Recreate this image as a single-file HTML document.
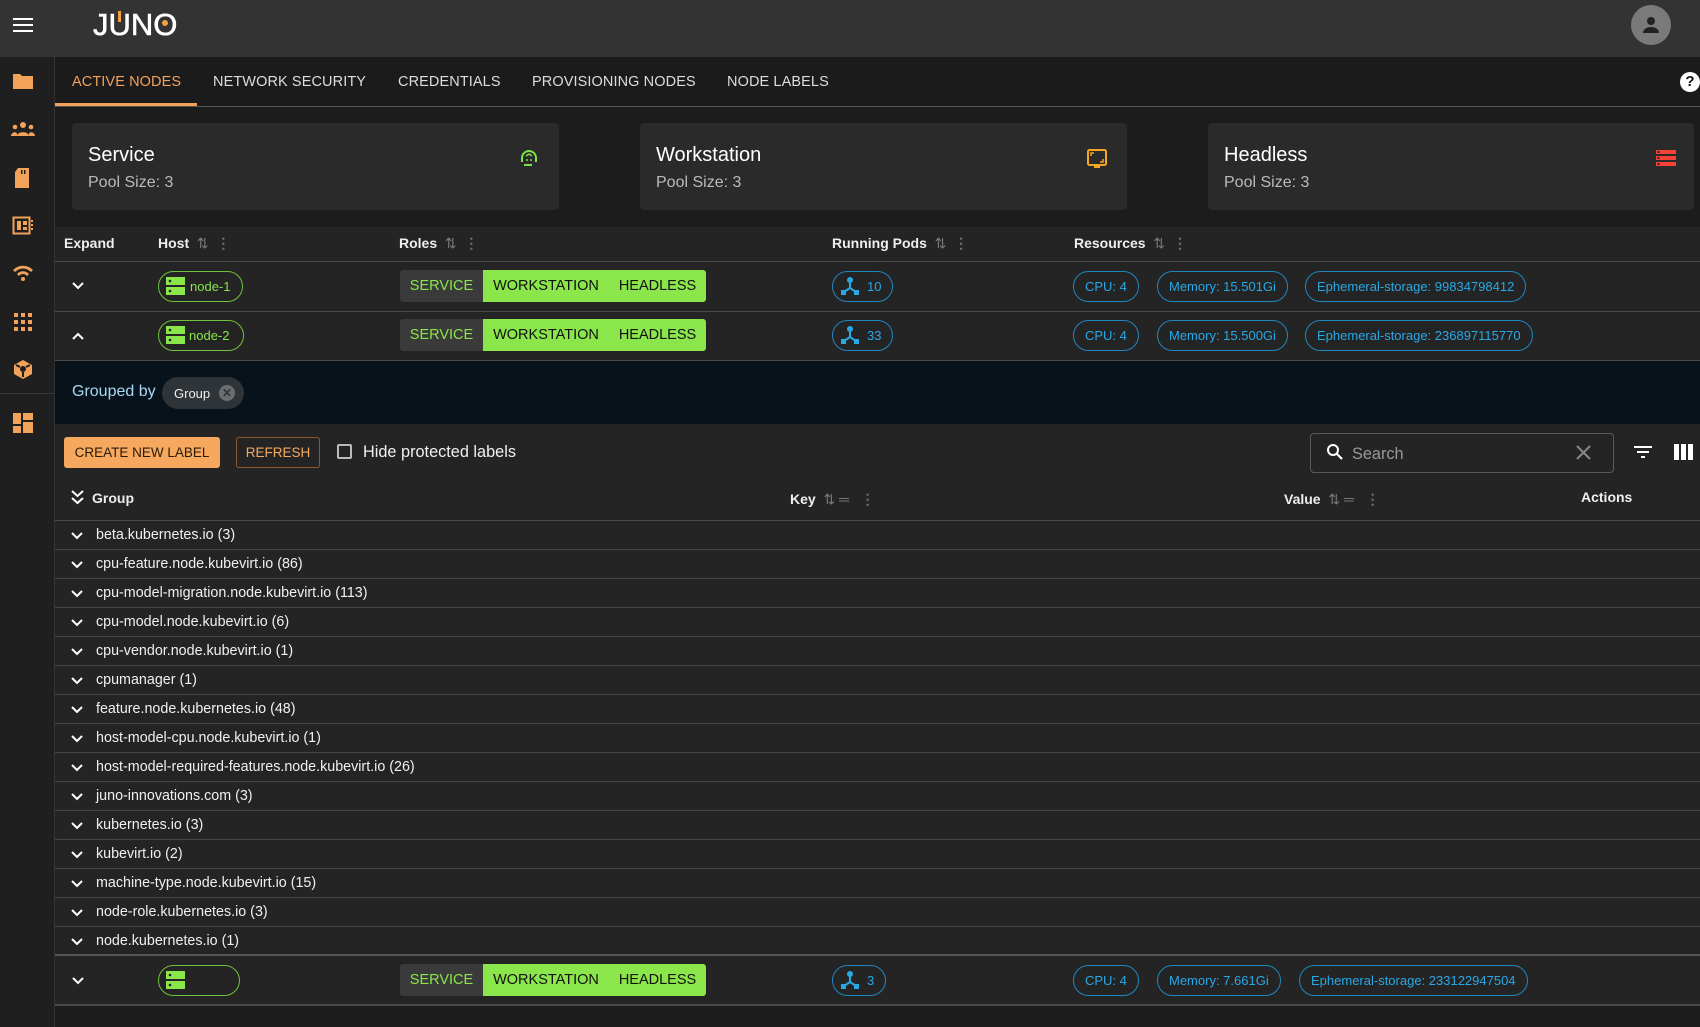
<!DOCTYPE html>
<html><head><meta charset="utf-8"><style>
*{box-sizing:border-box;margin:0;padding:0}
body{width:1700px;height:1027px;overflow:hidden;background:#1c1c1c;font-family:"Liberation Sans",sans-serif;color:#fff;position:relative}
.a{position:absolute}
.top{left:0;top:0;width:1700px;height:57px;background:#333;}
.side{left:0;top:57px;width:55px;height:970px;background:#1f1f1f;border-right:1px solid #333}
.tabs{left:55px;top:57px;width:1645px;height:50px;background:#1b1b1b;border-bottom:1px solid #555}
.tab{position:absolute;top:17px;font-size:14.5px;color:#ddd;letter-spacing:.1px}
.card{top:123px;height:87px;background:#2a2a2a;border-radius:4px}
.card .t{position:absolute;left:16px;top:20px;font-size:20px;color:#fff}
.card .s{position:absolute;left:16px;top:50px;font-size:16px;color:#bbb}
.th{font-size:14px;font-weight:bold;color:#eee}
.sort{color:#777;font-weight:normal;font-size:14px}
.dots{color:#777;font-weight:bold}
.hline{left:55px;width:1645px;height:1px;background:#4a4a4a}
.chipg{height:31px;border:1.5px solid #6fc23d;border-radius:16px;color:#8ae64a;font-size:13px}
.roles{height:32px;display:flex;font-size:14.5px;border-radius:3px;overflow:hidden}
.roles div{line-height:32px;text-align:center}
.rs{background:#3a3a3a;color:#8ae64a;width:83px}
.rg{background:#8ae64a;color:#111}
.w1{width:126px}.w2{width:97px}
.bl{height:31px;border:1.2px solid #1f87c0;border-radius:16px;color:#29a8e6;font-size:13px;line-height:29px;padding:0 11px}
.grow{left:55px;width:1645px;height:29px;border-bottom:1px solid #454545;font-size:14.3px;color:#f0f0f0}
.grow span{position:absolute;left:41px;top:6px}
.chev{position:absolute;left:16px;top:6px}
</style></head><body>
<div class="a top"></div>
<svg class="a" style="left:13px;top:17px" width="20" height="16"><rect y="1" width="20" height="2" fill="#fff"/><rect y="7" width="20" height="2" fill="#fff"/><rect y="13" width="20" height="2" fill="#fff"/></svg>
<div class="a" style="left:93px;top:7px;font-size:31px;letter-spacing:0px;color:#fff;-webkit-text-stroke:0.6px #fff">J<span style="display:inline-block;position:relative">U<span style="position:absolute;left:9px;top:4px;width:3px;height:11px;background:#f5a040"></span></span>N<span style="display:inline-block;position:relative">O<span style="position:absolute;left:9px;top:13px;width:6px;height:6px;border-radius:3px;background:#f5a040"></span></span></div>
<div class="a" style="left:1631px;top:5px;width:40px;height:40px;border-radius:50%;background:#7a7a7a"></div>
<svg class="a" style="left:1639px;top:13px" width="24" height="24" viewBox="0 0 24 24"><circle cx="12" cy="8" r="4" fill="#222"/><path d="M4 20c0-4 4-6 8-6s8 2 8 6z" fill="#222"/></svg>

<div class="a side"></div>
<div class="a" style="left:0;top:393px;width:55px;height:1px;background:#3a3a3a"></div>
<svg class="a" style="left:12px;top:71px" width="22" height="20"><path d="M1 3h7l2 2h11v13H1z" fill="#f3a25a"/></svg>
<svg class="a" style="left:10px;top:121px" width="26" height="16"><circle cx="13" cy="4" r="3" fill="#f3a25a"/><circle cx="5" cy="6" r="2.3" fill="#f3a25a"/><circle cx="21" cy="6" r="2.3" fill="#f3a25a"/><path d="M7 15c0-5 12-5 12 0z M1 15c0-4 6-5 6-2v2z M25 15c0-4-6-5-6-2v2z" fill="#f3a25a"/></svg>
<svg class="a" style="left:13px;top:167px" width="18" height="22"><path d="M5 1h11v20H2V5z" fill="#f3a25a"/><rect x="8" y="3" width="1.5" height="4" fill="#1f1f1f"/><rect x="11" y="3" width="1.5" height="4" fill="#1f1f1f"/></svg>
<svg class="a" style="left:12px;top:216px" width="22" height="20"><rect x="1.5" y="1.5" width="16" height="16" fill="none" stroke="#f3a25a" stroke-width="2"/><rect x="5" y="5" width="4" height="9" fill="#f3a25a"/><rect x="11" y="5" width="4" height="4" fill="#f3a25a"/><rect x="11" y="11" width="4" height="3" fill="#f3a25a"/><rect x="19" y="4" width="2" height="2" fill="#f3a25a"/><rect x="19" y="8" width="2" height="2" fill="#f3a25a"/><rect x="19" y="12" width="2" height="2" fill="#f3a25a"/></svg>
<svg class="a" style="left:12px;top:265px" width="22" height="16"><path d="M1 5a14 14 0 0 1 20 0l-2 2a11 11 0 0 0-16 0z M5 9a8 8 0 0 1 12 0l-2 2a5 5 0 0 0-8 0z" fill="#f3a25a"/><circle cx="11" cy="14" r="2" fill="#f3a25a"/></svg>
<svg class="a" style="left:14px;top:313px" width="18" height="18"><g fill="#f3a25a"><rect x="0" y="0" width="4" height="4"/><rect x="7" y="0" width="4" height="4"/><rect x="14" y="0" width="4" height="4"/><rect x="0" y="7" width="4" height="4"/><rect x="7" y="7" width="4" height="4"/><rect x="14" y="7" width="4" height="4"/><rect x="0" y="14" width="4" height="4"/><rect x="7" y="14" width="4" height="4"/><rect x="14" y="14" width="4" height="4"/></g></svg>
<svg class="a" style="left:13px;top:359px" width="20" height="21"><path d="M10 1l9 5v9l-9 5-9-5V6z" fill="#f3a25a"/><circle cx="10" cy="10" r="3" fill="#1f1f1f"/><path d="M10 13v5M7 8L3 6M13 8l4-2" stroke="#1f1f1f" stroke-width="2"/></svg>
<svg class="a" style="left:13px;top:413px" width="20" height="20"><g fill="#f3a25a"><rect x="0" y="0" width="8" height="11"/><rect x="10" y="0" width="10" height="7"/><rect x="10" y="9" width="10" height="11"/><rect x="0" y="13" width="8" height="7"/></g></svg>

<div class="a tabs"></div>
<div class="tab" style="left:72px;top:74px;color:#f3a25a">ACTIVE NODES</div>
<div class="a" style="left:55px;top:103px;width:142px;height:3px;background:#f3a25a"></div>
<div class="tab" style="left:213px;top:74px">NETWORK SECURITY</div>
<div class="tab" style="left:398px;top:74px">CREDENTIALS</div>
<div class="tab" style="left:532px;top:74px">PROVISIONING NODES</div>
<div class="tab" style="left:727px;top:74px">NODE LABELS</div>
<div class="a" style="left:1680px;top:72px;width:20px;height:20px;border-radius:10px;background:#fff;color:#111;font-weight:bold;font-size:15px;text-align:center;line-height:20px">?</div>

<div class="a card" style="left:72px;width:487px"><div class="t" style="top:21px">Service</div><div class="s" style="top:51px">Pool Size: 3</div>
<svg class="a" style="left:447px;top:26px" width="20" height="20" viewBox="0 0 20 20"><path d="M3 13V9a7 7 0 0 1 14 0v4" fill="none" stroke="#7fe046" stroke-width="2"/><path d="M5 16h8" stroke="#7fe046" stroke-width="2"/><path d="M7 7l3-2 3 2" fill="none" stroke="#7fe046" stroke-width="1.5"/><circle cx="8" cy="11" r="1" fill="#7fe046"/><circle cx="12" cy="11" r="1" fill="#7fe046"/></svg></div>
<div class="a card" style="left:640px;width:487px"><div class="t" style="top:21px">Workstation</div><div class="s" style="top:51px">Pool Size: 3</div>
<svg class="a" style="left:447px;top:26px" width="20" height="20"><rect x="1" y="1" width="18" height="15" rx="1.5" fill="none" stroke="#f5a623" stroke-width="2"/><rect x="7" y="17" width="6" height="2" fill="#f5a623"/><path d="M4 7V4h3M16 10v3h-3" fill="none" stroke="#f5a623" stroke-width="1.5"/></svg></div>
<div class="a card" style="left:1208px;width:486px"><div class="t" style="top:21px">Headless</div><div class="s" style="top:51px">Pool Size: 3</div>
<svg class="a" style="left:448px;top:27px" width="20" height="17"><g fill="#f44336"><rect y="0" width="20" height="4"/><rect y="6" width="20" height="4"/><rect y="12" width="20" height="4"/></g><g fill="#2a2a2a"><rect x="1.5" y="1" width="2" height="2"/><rect x="1.5" y="7" width="2" height="2"/><rect x="1.5" y="13" width="2" height="2"/></g></svg></div>

<div class="a" style="left:55px;top:227px;width:1645px;height:780px;background:#242424"></div>
<div class="a th" style="left:64px;top:235px">Expand</div>
<div class="a th" style="left:158px;top:235px">Host <span class="sort">&nbsp;⇅</span> <span class="dots">&nbsp;⋮</span></div>
<div class="a th" style="left:399px;top:235px">Roles <span class="sort">&nbsp;⇅</span> <span class="dots">&nbsp;⋮</span></div>
<div class="a th" style="left:832px;top:235px">Running Pods <span class="sort">&nbsp;⇅</span> <span class="dots">&nbsp;⋮</span></div>
<div class="a th" style="left:1074px;top:235px">Resources <span class="sort">&nbsp;⇅</span> <span class="dots">&nbsp;⋮</span></div>
<div class="a hline" style="top:261px"></div>
<div class="a hline" style="top:311px"></div>
<div class="a hline" style="top:360px"></div>

<!-- row1 -->
<svg class="a" style="left:72px;top:282px" width="12" height="8"><path d="M1 1l5 5 5-5" fill="none" stroke="#fff" stroke-width="2"/></svg>
<div class="a chipg" style="left:158px;top:271px;width:85px"><svg class="a" style="left:7px;top:5px" width="19" height="18"><rect width="19" height="8" fill="#8ae64a"/><rect y="10" width="19" height="8" fill="#8ae64a"/><circle cx="4" cy="4" r="1.3" fill="#222"/><circle cx="4" cy="14" r="1.3" fill="#222"/></svg><span class="a" style="left:31px;top:7px">node-1</span></div>
<div class="a roles" style="left:400px;top:270px"><div class="rs">SERVICE</div><div class="rg w1">WORKSTATION</div><div class="rg w2">HEADLESS</div></div>
<div class="a bl" style="left:832px;top:271px;padding-left:34px">10</div>
<div class="a bl" style="left:1073px;top:271px">CPU: 4</div>
<div class="a bl" style="left:1157px;top:271px">Memory: 15.501Gi</div>
<div class="a bl" style="left:1305px;top:271px">Ephemeral-storage: 99834798412</div>
<!-- row2 -->
<svg class="a" style="left:72px;top:332px" width="12" height="8"><path d="M1 7l5-5 5 5" fill="none" stroke="#fff" stroke-width="2"/></svg>
<div class="a chipg" style="left:158px;top:320px;width:86px"><svg class="a" style="left:7px;top:5px" width="19" height="18"><rect width="19" height="8" fill="#8ae64a"/><rect y="10" width="19" height="8" fill="#8ae64a"/><circle cx="4" cy="4" r="1.3" fill="#222"/><circle cx="4" cy="14" r="1.3" fill="#222"/></svg><span class="a" style="left:30px;top:7px">node-2</span></div>
<div class="a roles" style="left:400px;top:319px"><div class="rs">SERVICE</div><div class="rg w1">WORKSTATION</div><div class="rg w2">HEADLESS</div></div>
<div class="a bl" style="left:832px;top:320px;padding-left:34px">33</div>
<div class="a bl" style="left:1073px;top:320px">CPU: 4</div>
<div class="a bl" style="left:1157px;top:320px">Memory: 15.500Gi</div>
<div class="a bl" style="left:1305px;top:320px">Ephemeral-storage: 236897115770</div>

<div class="a" style="left:55px;top:361px;width:1645px;height:63px;background:#08121a"></div>
<div class="a" style="left:72px;top:383px;font-size:16px;color:#a9d8f5">Grouped by</div>
<div class="a" style="left:162px;top:377px;width:82px;height:32px;border-radius:16px;background:#2e3438"></div>
<div class="a" style="left:174px;top:386px;font-size:13px;color:#eee">Group</div>
<div class="a" style="left:219px;top:385px;width:16px;height:16px;border-radius:8px;background:#6a6e70;color:#2e3438;font-size:12px;text-align:center;line-height:16px;font-weight:bold">✕</div>

<div class="a" style="left:64px;top:437px;width:156px;height:31px;background:#f6a95e;border-radius:3px;color:#2a1a0a;font-size:13.5px;text-align:center;line-height:31px">CREATE NEW LABEL</div>
<div class="a" style="left:236px;top:437px;width:84px;height:31px;border:1px solid #8a5a30;border-radius:3px;color:#f6a95e;font-size:13.5px;text-align:center;line-height:29px">REFRESH</div>
<div class="a" style="left:337px;top:444px;width:15px;height:15px;border:2px solid #bbb;border-radius:2px"></div>
<div class="a" style="left:363px;top:443px;font-size:16.3px;color:#f0f0f0">Hide protected labels</div>
<div class="a" style="left:1310px;top:433px;width:304px;height:40px;border:1px solid #5a5a5a;border-radius:4px"></div>
<svg class="a" style="left:1326px;top:443px" width="18" height="18"><circle cx="7" cy="7" r="5" fill="none" stroke="#fff" stroke-width="2"/><path d="M11 11l5 5" stroke="#fff" stroke-width="2.2"/></svg>
<div class="a" style="left:1352px;top:445px;font-size:16.3px;color:#999">Search</div>
<svg class="a" style="left:1576px;top:445px" width="15" height="15"><path d="M1 1l13 13M14 1L1 14" stroke="#888" stroke-width="2"/></svg>
<svg class="a" style="left:1634px;top:446px" width="20" height="14"><rect y="0" width="18" height="2" fill="#fff"/><rect x="3" y="5" width="12" height="2" fill="#fff"/><rect x="7" y="10" width="4" height="2" fill="#fff"/></svg>
<svg class="a" style="left:1674px;top:444px" width="19" height="16"><g fill="#fff"><rect width="5" height="16"/><rect x="7" width="5" height="16"/><rect x="14" width="5" height="16"/></g></svg>

<svg class="a" style="left:71px;top:490px" width="13" height="15"><path d="M1 1l5.5 5 5.5-5M1 8l5.5 5 5.5-5" fill="none" stroke="#fff" stroke-width="2"/></svg>
<div class="a th" style="left:92px;top:490px">Group</div>
<div class="a th" style="left:790px;top:491px">Key <span class="sort">&nbsp;⇅ ═</span> <span class="dots">&nbsp;&nbsp;⋮</span></div>
<div class="a th" style="left:1284px;top:491px">Value <span class="sort">&nbsp;⇅ ═</span> <span class="dots">&nbsp;&nbsp;⋮</span></div>
<div class="a th" style="left:1581px;top:489px">Actions</div>
<div class="a hline" style="top:520px"></div>

<div class="a" style="left:0;top:521px">
<div class="a grow" style="top:0"><svg class="chev" width="12" height="8" style="top:11px"><path d="M1 1l5 5 5-5" fill="none" stroke="#fff" stroke-width="2"/></svg><span>beta.kubernetes.io (3)</span></div>
<div class="a grow" style="top:29px"><svg class="chev" width="12" height="8" style="top:11px"><path d="M1 1l5 5 5-5" fill="none" stroke="#fff" stroke-width="2"/></svg><span>cpu-feature.node.kubevirt.io (86)</span></div>
<div class="a grow" style="top:58px"><svg class="chev" width="12" height="8" style="top:11px"><path d="M1 1l5 5 5-5" fill="none" stroke="#fff" stroke-width="2"/></svg><span>cpu-model-migration.node.kubevirt.io (113)</span></div>
<div class="a grow" style="top:87px"><svg class="chev" width="12" height="8" style="top:11px"><path d="M1 1l5 5 5-5" fill="none" stroke="#fff" stroke-width="2"/></svg><span>cpu-model.node.kubevirt.io (6)</span></div>
<div class="a grow" style="top:116px"><svg class="chev" width="12" height="8" style="top:11px"><path d="M1 1l5 5 5-5" fill="none" stroke="#fff" stroke-width="2"/></svg><span>cpu-vendor.node.kubevirt.io (1)</span></div>
<div class="a grow" style="top:145px"><svg class="chev" width="12" height="8" style="top:11px"><path d="M1 1l5 5 5-5" fill="none" stroke="#fff" stroke-width="2"/></svg><span>cpumanager (1)</span></div>
<div class="a grow" style="top:174px"><svg class="chev" width="12" height="8" style="top:11px"><path d="M1 1l5 5 5-5" fill="none" stroke="#fff" stroke-width="2"/></svg><span>feature.node.kubernetes.io (48)</span></div>
<div class="a grow" style="top:203px"><svg class="chev" width="12" height="8" style="top:11px"><path d="M1 1l5 5 5-5" fill="none" stroke="#fff" stroke-width="2"/></svg><span>host-model-cpu.node.kubevirt.io (1)</span></div>
<div class="a grow" style="top:232px"><svg class="chev" width="12" height="8" style="top:11px"><path d="M1 1l5 5 5-5" fill="none" stroke="#fff" stroke-width="2"/></svg><span>host-model-required-features.node.kubevirt.io (26)</span></div>
<div class="a grow" style="top:261px"><svg class="chev" width="12" height="8" style="top:11px"><path d="M1 1l5 5 5-5" fill="none" stroke="#fff" stroke-width="2"/></svg><span>juno-innovations.com (3)</span></div>
<div class="a grow" style="top:290px"><svg class="chev" width="12" height="8" style="top:11px"><path d="M1 1l5 5 5-5" fill="none" stroke="#fff" stroke-width="2"/></svg><span>kubernetes.io (3)</span></div>
<div class="a grow" style="top:319px"><svg class="chev" width="12" height="8" style="top:11px"><path d="M1 1l5 5 5-5" fill="none" stroke="#fff" stroke-width="2"/></svg><span>kubevirt.io (2)</span></div>
<div class="a grow" style="top:348px"><svg class="chev" width="12" height="8" style="top:11px"><path d="M1 1l5 5 5-5" fill="none" stroke="#fff" stroke-width="2"/></svg><span>machine-type.node.kubevirt.io (15)</span></div>
<div class="a grow" style="top:377px"><svg class="chev" width="12" height="8" style="top:11px"><path d="M1 1l5 5 5-5" fill="none" stroke="#fff" stroke-width="2"/></svg><span>node-role.kubernetes.io (3)</span></div>
<div class="a grow" style="top:406px;border-bottom:2px solid #555"><svg class="chev" width="12" height="8" style="top:11px"><path d="M1 1l5 5 5-5" fill="none" stroke="#fff" stroke-width="2"/></svg><span>node.kubernetes.io (1)</span></div>
</div>

<!-- last row -->
<svg class="a" style="left:72px;top:977px" width="12" height="8"><path d="M1 1l5 5 5-5" fill="none" stroke="#fff" stroke-width="2"/></svg>
<div class="a chipg" style="left:158px;top:965px;width:82px"><svg class="a" style="left:7px;top:5px" width="19" height="18"><rect width="19" height="8" fill="#8ae64a"/><rect y="10" width="19" height="8" fill="#8ae64a"/><circle cx="4" cy="4" r="1.3" fill="#222"/><circle cx="4" cy="14" r="1.3" fill="#222"/></svg></div>
<div class="a roles" style="left:400px;top:964px"><div class="rs">SERVICE</div><div class="rg w1">WORKSTATION</div><div class="rg w2">HEADLESS</div></div>
<div class="a bl" style="left:832px;top:965px;padding-left:34px">3</div>
<div class="a bl" style="left:1073px;top:965px">CPU: 4</div>
<div class="a bl" style="left:1157px;top:965px">Memory: 7.661Gi</div>
<div class="a bl" style="left:1299px;top:965px">Ephemeral-storage: 233122947504</div>
<div class="a" style="left:55px;top:1004px;width:1645px;height:2px;background:#4a4a4a"></div>
<div class="a" style="left:55px;top:1006px;width:1645px;height:21px;background:#1c1c1c"></div>

<svg class="a" style="left:840px;top:276px" width="20" height="20" viewBox="0 0 20 20"><circle cx="10" cy="4" r="3" fill="#29a8e6"/><path d="M10 6v6M10 12l-6 4M10 12l6 4" stroke="#29a8e6" stroke-width="2"/><rect x="1" y="14" width="5" height="5" fill="#29a8e6"/><rect x="14" y="14" width="5" height="5" fill="#29a8e6"/></svg>
<svg class="a" style="left:840px;top:325px" width="20" height="20" viewBox="0 0 20 20"><circle cx="10" cy="4" r="3" fill="#29a8e6"/><path d="M10 6v6M10 12l-6 4M10 12l6 4" stroke="#29a8e6" stroke-width="2"/><rect x="1" y="14" width="5" height="5" fill="#29a8e6"/><rect x="14" y="14" width="5" height="5" fill="#29a8e6"/></svg>
<svg class="a" style="left:840px;top:970px" width="20" height="20" viewBox="0 0 20 20"><circle cx="10" cy="4" r="3" fill="#29a8e6"/><path d="M10 6v6M10 12l-6 4M10 12l6 4" stroke="#29a8e6" stroke-width="2"/><rect x="1" y="14" width="5" height="5" fill="#29a8e6"/><rect x="14" y="14" width="5" height="5" fill="#29a8e6"/></svg>
</body></html>
